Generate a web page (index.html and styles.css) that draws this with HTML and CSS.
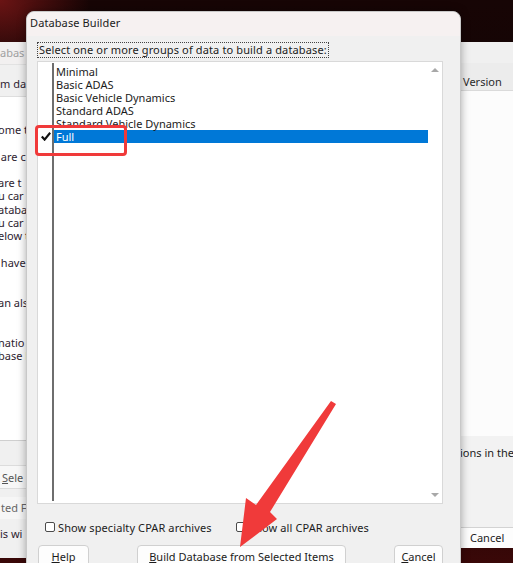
FILE: index.html
```html
<!DOCTYPE html>
<html>
<head>
<meta charset="utf-8">
<title>Database Builder</title>
<link rel="stylesheet" href="styles.css">
</head>
<body>
<div class="desktop">
  <div class="win win-left">
    <div class="wl-title">abas</div>
    <div class="wl-head">m dat</div>
    <div class="wl-body">ome t

 are c

are t
u car
ataba
u car
elow t

 have


an als


natio
base E</div>
    <div class="wl-foot">
      <div class="wl-btn"><u>S</u>ele</div>
      <div class="wl-row2">ted F</div>
      <div class="wl-row3">is wi</div>
    </div>
  </div>

  <div class="win win-right">
    <div class="wr-top"></div>
    <div class="wr-head">Version</div>
    <div class="wr-body"></div>
    <div class="wr-foot">
      <div class="wr-text">ions in the</div>
      <div class="wr-btn">Cancel</div>
    </div>
  </div>

  <div class="dialog">
    <div class="dlg-title">Database Builder</div>
    <div class="dlg-body">
      <div class="prompt">Select one or more groups of data to build a database:</div>
      <div class="listbox">
        <div class="gutter">
          <div class="grow"></div>
          <div class="grow"></div>
          <div class="grow"></div>
          <div class="grow"></div>
          <div class="grow"></div>
          <div class="grow">
            <svg class="check" width="10" height="9" viewBox="0 0 10 9"><path d="M0.8 4.6 L3.6 7.6 L9.2 0.8" fill="none" stroke="#111" stroke-width="2.2"/></svg>
          </div>
        </div>
        <div class="vline"></div>
        <div class="items">
          <div class="item">Minimal</div>
          <div class="item">Basic ADAS</div>
          <div class="item">Basic Vehicle Dynamics</div>
          <div class="item">Standard ADAS</div>
          <div class="item">Standard Vehicle Dynamics</div>
          <div class="item sel">Full</div>
        </div>
        <div class="scroll">
          <span class="tri up"></span>
          <span class="tri down"></span>
        </div>
      </div>
      <div class="checks">
        <label class="chk first"><span class="box"></span>Show specialty CPAR archives</label>
        <label class="chk"><span class="box"></span>Show all CPAR archives</label>
      </div>
      <div class="buttons">
        <div class="btn b-help"><u>H</u>elp</div>
        <div class="btn b-build"><u>B</u>uild Database from Selected Items</div>
        <div class="btn b-cancel"><u>C</u>ancel</div>
      </div>
    </div>
  </div>

  <div class="mark-box"></div>
  <svg class="arrow" width="513" height="563" viewBox="0 0 513 563">
    <polygon points="331,401 336,404 270,512 277,519 240,547 246,498 256,505" fill="#f03a3a"/>
  </svg>
</div>
</body>
</html>
```

FILE: styles.css
```css
* { box-sizing: border-box; }
html, body { margin: 0; padding: 0; }
body {
  width: 513px;
  height: 563px;
  overflow: hidden;
  background: #0e0404;
  font-family: "Noto Sans", "Open Sans", sans-serif;
  font-size: 11px;
  color: #1b1b1b;
}
.desktop {
  position: relative;
  width: 513px;
  height: 563px;
  overflow: hidden;
  background:
    radial-gradient(ellipse 90px 70px at 0 0, #6b1414, rgba(60,8,8,0) 100%),
    linear-gradient(180deg, #170505 0%, #0d0303 70%, #3a0808 100%);
}

/* background windows */
.win { position: absolute; top: 42px; overflow: hidden; }
.win-left {
  left: 0;
  width: 30px;
  height: 516px;
  background: #ffffff;
  display: flex;
  flex-direction: column;
  color: #2e2330;
}
.wl-title {
  height: 22px;
  line-height: 22px;
  background: #f2f0f0;
  color: #a0a0a0;
  white-space: nowrap;
}
.wl-head {
  height: 33px;
  padding-top: 12px;
  line-height: 14px;
  background: #f0f0f0;
  border-top: 1px solid #e2e2e2;
  border-bottom: 1px solid #dedede;
  white-space: nowrap;
}
.wl-body {
  height: 343px;
  padding-top: 26px;
  white-space: pre;
  line-height: 13.3px;
  margin-left: -2px;
}
.wl-foot {
  flex: 1;
  background: #f0f0f0;
  border-top: 1px solid #cfcfcf;
  white-space: nowrap;
}
.wl-btn {
  margin-top: 24px;
  height: 24px;
  line-height: 24px;
  background: #f7f7f7;
  border-top: 1px solid #dcdcdc;
  border-bottom: 1px solid #dcdcdc;
  color: #555;
  padding-left: 2px;
}
.wl-row2 {
  margin-top: 8px;
  height: 22px;
  line-height: 22px;
  background: #f6f6f6;
  color: #666;
  padding-left: 1px;
}
.wl-row3 {
  margin-top: 8px;
  line-height: 14px;
}

.win-right {
  left: 456px;
  width: 60px;
  height: 506px;
  background: #f0f0f0;
  display: flex;
  flex-direction: column;
}
.wr-top { height: 21px; background: #f0f0f0; }
.wr-head {
  height: 28px;
  padding: 12px 0 0 7px;
  line-height: 14px;
  background: #ececec;
  border-bottom: 1px solid #dadada;
  color: #2a2a2a;
}
.wr-body {
  height: 345px;
  background: #fcfcfc;
}
.wr-foot {
  flex: 1;
  background: #f2f2f2;
  display: flex;
  flex-direction: column;
  padding-left: 4px;
}
.wr-text {
  margin-top: 10px;
  line-height: 14px;
  white-space: nowrap;
}
.wr-btn {
  margin-top: auto;
  height: 21px;
  line-height: 20px;
  width: 64px;
  margin-left: -2px;
  background: #fdfdfd;
  border: 1px solid #d3d3d3;
  border-bottom: none;
  padding-left: 11px;
  color: #222;
}

/* dialog */
.dialog {
  position: absolute;
  left: 26px;
  top: 11px;
  width: 435px;
  height: 575px;
  background: #f0f0f0;
  border: 1px solid #c8c8c8;
  border-radius: 8px 8px 0 0;
  box-shadow: 0 0 9px rgba(0,0,0,0.35);
  display: flex;
  flex-direction: column;
}
.dlg-title {
  height: 24px;
  line-height: 22px;
  padding-left: 3px;
  background: #f6f1f1;
  border-radius: 8px 8px 0 0;
  color: #1b1b1b;
  letter-spacing: 0.1px;
}
.dlg-body {
  display: flex;
  flex-direction: column;
  padding: 6px 17px 0 10px;
}
.prompt {
  align-self: flex-start;
  height: 16px;
  line-height: 14px;
  padding: 0 1px;
  border: 1px dotted #444;
  white-space: nowrap;
  letter-spacing: 0.13px;
}
.listbox {
  margin-top: 3px;
  height: 443px;
  background: #ffffff;
  border: 1px solid #d9d9d9;
  display: flex;
}
.gutter {
  width: 14px;
  padding-top: 3px;
}
.grow { height: 13px; display: flex; align-items: center; padding-left: 3px; }
.vline {
  width: 2px;
  margin: 1px 0 2px;
  background: #6e6e6e;
}
.items {
  flex: 1;
  padding-top: 3px;
}
.item {
  height: 13px;
  line-height: 13px;
  padding-left: 2px;
  white-space: nowrap;
}
.item.sel { background: #0078d7; color: #ffffff; }
.scroll {
  width: 14px;
  display: flex;
  flex-direction: column;
  justify-content: space-between;
  align-items: center;
  padding: 6px 0 6px;
}
.tri { width: 0; height: 0; border-left: 4px solid transparent; border-right: 4px solid transparent; }
.tri.up { border-bottom: 4px solid #a8a8a8; }
.tri.down { border-top: 4px solid #a8a8a8; }

.checks {
  margin-top: 15px;
  height: 16px;
  display: flex;
  align-items: center;
  padding-left: 8px;
  letter-spacing: 0.1px;
}
.chk { display: flex; align-items: center; gap: 3px; white-space: nowrap; }
.chk.first { width: 191px; }
.box {
  width: 10px;
  height: 10px;
  border: 1px solid #4a4a4a;
  border-radius: 2px;
  background: #ffffff;
}

.buttons {
  margin-top: 10px;
  display: flex;
  justify-content: space-between;
  padding-left: 1px;
}
.btn {
  height: 23px;
  line-height: 21px;
  text-align: center;
  background: #fdfdfd;
  border: 1px solid #d0d0d0;
  border-radius: 4px;
  white-space: nowrap;
}
.b-help { width: 51px; }
.b-build { width: 209px; }
.b-cancel { width: 49px; }

/* annotations */
.mark-box {
  position: absolute;
  left: 35px;
  top: 125px;
  width: 92px;
  height: 31px;
  border: 3px solid #f03a3a;
  border-radius: 4px;
}
.arrow {
  position: absolute;
  left: 0;
  top: 0;
  pointer-events: none;
}
```
